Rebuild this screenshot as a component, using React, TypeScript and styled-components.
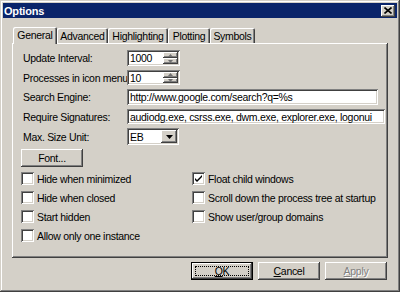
import React from 'react';
import styled, { createGlobalStyle, css } from 'styled-components';

const GlobalStyle = createGlobalStyle`
  html, body {
    margin: 0;
    padding: 0;
    background: #d4d0c8;
  }
  body {
    font-family: "Liberation Sans", Arial, sans-serif;
    font-size: 10.5px;
    letter-spacing: -0.3px;
    color: #000;
  }
  * { box-sizing: border-box; }
`;

const raised = css`
  box-shadow: inset -1px -1px #404040, inset 1px 1px #fff, inset -2px -2px #808080;
`;

const sunken = css`
  box-shadow: inset 1px 1px #808080, inset -1px -1px #fff, inset 2px 2px #404040, inset -2px -2px #d4d0c8;
`;

const Window = styled.div`
  width: 400px;
  height: 292px;
  padding: 3px;
  background: #d4d0c8;
  box-shadow: inset -1px -1px #404040, inset 1px 1px #d4d0c8, inset -2px -2px #808080, inset 2px 2px #fff;
  display: flex;
  flex-direction: column;
`;

const TitleBar = styled.div`
  height: 15px;
  background: #0a246a;
  display: flex;
  align-items: center;
  justify-content: space-between;
  padding: 0 2px 0 1px;
`;

const Title = styled.span`
  color: #fff;
  font-weight: bold;
  font-size: 11px;
  letter-spacing: -0.2px;
`;

const CloseButton = styled.div`
  width: 14px;
  height: 12px;
  background: #d4d0c8;
  ${raised};
  display: flex;
  align-items: center;
  justify-content: center;
`;

const Body = styled.div`
  padding: 9px 0 0 9px;
`;

const TabStrip = styled.div`
  display: flex;
  align-items: flex-end;
  padding-left: 1px;
  height: 16px;
  position: relative;
  z-index: 1;
`;

const Tab = styled.div<{ $w: number; $active?: boolean }>`
  width: ${(p) => p.$w}px;
  height: ${(p) => (p.$active ? 17 : 15)}px;
  margin-bottom: ${(p) => (p.$active ? -1 : 0)}px;
  background: #d4d0c8;
  box-shadow: inset 1px 1px #fff, inset -1px 0 #404040, inset -2px 0 #808080;
  border-radius: 2px 2px 0 0;
  display: flex;
  align-items: center;
  justify-content: center;
  padding-bottom: ${(p) => (p.$active ? 2 : 0)}px;
`;

const Panel = styled.div`
  width: 376px;
  height: 215px;
  ${raised};
  padding: 7px 9px 0 9px;
`;

const FormGrid = styled.div`
  display: grid;
  grid-template-columns: 106px 1fr;
  grid-template-rows: 16px 15px 16px 15px 17px;
  row-gap: 4px;
  align-items: center;
`;

const Label = styled.span`
  padding-left: 2px;
  white-space: nowrap;
`;

const Field = styled.div<{ $w: number }>`
  width: ${(p) => p.$w}px;
  height: 100%;
  background: #fff;
  ${sunken};
  display: flex;
  align-items: center;
  padding: 0 2px 0 3px;
  white-space: nowrap;
  overflow: hidden;
`;

const FieldText = styled.span`
  flex: 1;
  overflow: hidden;
`;

const SpinBox = styled.div`
  display: flex;
  flex-direction: column;
  width: 15px;
  height: calc(100% - 4px);
`;

const SpinHalf = styled.div`
  flex: 1;
  background: #d4d0c8;
  ${raised};
  display: flex;
  align-items: center;
  justify-content: center;
`;

const DropButton = styled.div`
  width: 16px;
  height: calc(100% - 4px);
  background: #d4d0c8;
  ${raised};
  display: flex;
  align-items: center;
  justify-content: center;
`;

const PushButton = styled.div<{ $default?: boolean; $disabled?: boolean }>`
  width: 62px;
  height: 18px;
  background: #d4d0c8;
  position: relative;
  display: flex;
  align-items: center;
  justify-content: center;
  ${(p) =>
    p.$default
      ? css`
          box-shadow: inset 0 0 0 1px #000, inset -2px -2px #404040, inset 2px 2px #fff, inset -3px -3px #808080;
        `
      : raised};
  color: ${(p) => (p.$disabled ? '#808080' : '#000')};
  text-shadow: ${(p) => (p.$disabled ? '1px 1px #fff' : 'none')};
`;

const FocusRing = styled.div`
  position: absolute;
  inset: 4px;
  border: 1px dotted #000;
`;

const FontButton = styled(PushButton)`
  margin: 4px 0 0 0;
`;

const CheckGrid = styled.div`
  display: grid;
  grid-template-columns: 171px 1fr;
  grid-auto-rows: 19px;
  margin-top: 2px;
  align-items: center;
`;

const CheckRow = styled.div<{ $col?: number }>`
  display: flex;
  align-items: center;
  gap: 3px;
  grid-column: ${(p) => p.$col ?? 'auto'};
  white-space: nowrap;
`;

const Box = styled.div`
  width: 13px;
  height: 13px;
  background: #fff;
  ${sunken};
  display: flex;
  align-items: center;
  justify-content: center;
`;

const Footer = styled.div`
  display: flex;
  justify-content: flex-end;
  gap: 5px;
  padding: 4px 10px 0 0;
`;

const U = styled.span`
  text-decoration: underline;
`;

const Tri = ({ down = false, color = '#000', w = 7 }: { down?: boolean; color?: string; w?: number }) => {
  const h = Math.ceil(w / 2);
  return (
    <svg width={w} height={h} viewBox={`0 0 ${w} ${h}`}>
      <polygon
        points={down ? `0,0 ${w},0 ${w / 2},${h}` : `0,${h} ${w},${h} ${w / 2},0`}
        fill={color}
      />
    </svg>
  );
};

const Check: React.FC<{ checked?: boolean; label: string }> = ({ checked, label }) => (
  <>
    <Box>
      {checked && (
        <svg width="7" height="7" viewBox="0 0 7 7">
          <path d="M0 3 L2 5 L7 0 L7 2 L2 7 L0 5 Z" fill="#000" />
        </svg>
      )}
    </Box>
    <span>{label}</span>
  </>
);

const Spinner: React.FC<{ value: string }> = ({ value }) => (
  <Field $w={53}>
    <FieldText>{value}</FieldText>
    <SpinBox>
      <SpinHalf>
        <Tri w={5} color="#707070" />
      </SpinHalf>
      <SpinHalf>
        <Tri w={5} down color="#707070" />
      </SpinHalf>
    </SpinBox>
  </Field>
);

const tabs = [
  { name: 'General', w: 44, active: true },
  { name: 'Advanced', w: 51 },
  { name: 'Highlighting', w: 60 },
  { name: 'Plotting', w: 42 },
  { name: 'Symbols', w: 45 },
];

export default function App() {
  return (
    <>
      <GlobalStyle />
      <Window>
        <TitleBar>
          <Title>Options</Title>
          <CloseButton>
            <svg width="8" height="7" viewBox="0 0 8 7">
              <path d="M0.5 0.5 L7.5 6.5 M7.5 0.5 L0.5 6.5" stroke="#000" strokeWidth="1.6" />
            </svg>
          </CloseButton>
        </TitleBar>
        <Body>
          <TabStrip>
            {tabs.map((t) => (
              <Tab key={t.name} $w={t.w} $active={t.active}>
                {t.name}
              </Tab>
            ))}
          </TabStrip>
          <Panel>
            <FormGrid>
              <Label>Update Interval:</Label>
              <Spinner value="1000" />
              <Label>Processes in icon menu:</Label>
              <Spinner value="10" />
              <Label>Search Engine:</Label>
              <Field $w={251}>
                <FieldText>http://www.google.com/search?q=%s</FieldText>
              </Field>
              <Label>Require Signatures:</Label>
              <Field $w={258}>
                <FieldText>audiodg.exe, csrss.exe, dwm.exe, explorer.exe, logonui</FieldText>
              </Field>
              <Label>Max. Size Unit:</Label>
              <Field $w={52}>
                <FieldText>EB</FieldText>
                <DropButton>
                  <Tri w={7} down />
                </DropButton>
              </Field>
            </FormGrid>
            <FontButton>Font...</FontButton>
            <CheckGrid>
              <CheckRow>
                <Check label="Hide when minimized" />
              </CheckRow>
              <CheckRow>
                <Check checked label="Float child windows" />
              </CheckRow>
              <CheckRow>
                <Check label="Hide when closed" />
              </CheckRow>
              <CheckRow>
                <Check label="Scroll down the process tree at startup" />
              </CheckRow>
              <CheckRow>
                <Check label="Start hidden" />
              </CheckRow>
              <CheckRow>
                <Check label="Show user/group domains" />
              </CheckRow>
              <CheckRow $col={1}>
                <Check label="Allow only one instance" />
              </CheckRow>
            </CheckGrid>
          </Panel>
          <Footer>
            <PushButton $default>
              <FocusRing />
              <span>
                <U>O</U>K
              </span>
            </PushButton>
            <PushButton>
              <span>
                <U>C</U>ancel
              </span>
            </PushButton>
            <PushButton $disabled>
              <span>
                <U>A</U>pply
              </span>
            </PushButton>
          </Footer>
        </Body>
      </Window>
    </>
  );
}
